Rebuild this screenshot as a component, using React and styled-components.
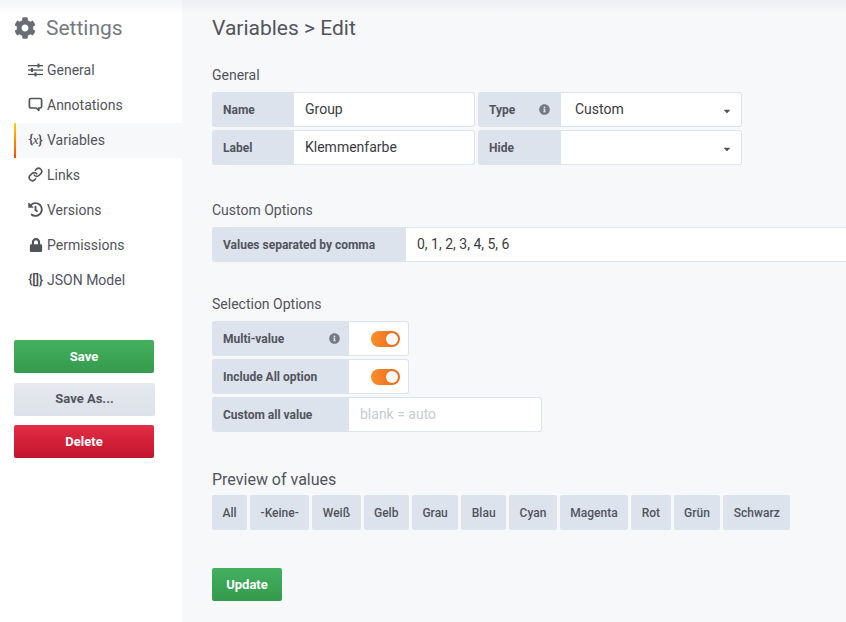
import React from 'react'
import styled, { createGlobalStyle } from 'styled-components'
import { FaCog, FaHistory, FaLock, FaInfoCircle, FaCaretDown } from 'react-icons/fa'
import { Link as LinkIcon } from 'lucide-react'

const GlobalStyle = createGlobalStyle`
  html, body {
    margin: 0;
    padding: 0;
    background: #f7f8fa;
    overflow: hidden;
  }
  * { box-sizing: border-box; }
  body {
    font-family: Roboto, "Liberation Sans", sans-serif;
    font-size: 14px;
    color: #52545c;
  }
`

const SlidersIcon = () => (
  <svg width="15" height="14" viewBox="0 0 15 14" fill="#52545c">
    <rect x="0" y="2" width="15" height="1.3" />
    <rect x="0" y="6.4" width="15" height="1.3" />
    <rect x="0" y="10.8" width="15" height="1.3" />
    <rect x="9.5" y="0.6" width="2" height="4" />
    <rect x="3" y="5" width="2" height="4" />
    <rect x="6.5" y="9.4" width="2" height="4" />
  </svg>
)

const CommentIcon = () => (
  <svg width="15" height="15" viewBox="0 0 15 15" fill="none">
    <path d="M3 1.5h9a1.6 1.6 0 0 1 1.6 1.6v6.3a1.6 1.6 0 0 1-1.6 1.6h-1.2v2.3l-2.4-2.3H3a1.6 1.6 0 0 1-1.6-1.6V3.1A1.6 1.6 0 0 1 3 1.5z" stroke="#52545c" strokeWidth="1.7" strokeLinejoin="round" />
  </svg>
)

const navItems = [
  { label: 'General', icon: <SlidersIcon /> },
  { label: 'Annotations', icon: <CommentIcon /> },
  { label: 'Variables', glyph: <>{'{'}<i>x</i>{'}'}</> },
  { label: 'Links', icon: <LinkIcon size={15} strokeWidth={2.5} /> },
  { label: 'Versions', icon: <FaHistory size={15} /> },
  { label: 'Permissions', icon: <FaLock size={14} /> },
  { label: 'JSON Model', glyph: '{[]}' },
]

const previewValues = ['All', '-Keine-', 'Weiß', 'Gelb', 'Grau', 'Blau', 'Cyan', 'Magenta', 'Rot', 'Grün', 'Schwarz']

function App() {
  return (
    <>
      <GlobalStyle />
      <Page>
        <Sidebar>
          <SidebarTitle>
            <FaCog size={22} />
            <span>Settings</span>
          </SidebarTitle>
          <Nav>
            {navItems.map((item) => (
              <NavItem key={item.label} $active={item.label === 'Variables'}>
                <NavIcon>{item.icon || <Glyph>{item.glyph}</Glyph>}</NavIcon>
                {item.label}
              </NavItem>
            ))}
          </Nav>
          <Actions>
            <ActionButton $kind="green">Save</ActionButton>
            <ActionButton $kind="gray">Save As...</ActionButton>
            <ActionButton $kind="red">Delete</ActionButton>
          </Actions>
        </Sidebar>

        <Content>
          <PageTitle>Variables &gt; Edit</PageTitle>

          <SectionTitle $top={23}>General</SectionTitle>
          <Rows>
            <Row>
              <Group>
                <Label $width={82}>Name</Label>
                <Field $width={181}>Group</Field>
              </Group>
              <Group>
                <Label $width={83} $wide>
                  Type
                  <InfoIcon />
                </Label>
                <SelectField $width={181}>
                  Custom
                  <Caret />
                </SelectField>
              </Group>
            </Row>
            <Row>
              <Group>
                <Label $width={82}>Label</Label>
                <Field $width={181}>Klemmenfarbe</Field>
              </Group>
              <Group>
                <Label $width={83}>Hide</Label>
                <SelectField $width={181}>
                  <span />
                  <Caret />
                </SelectField>
              </Group>
            </Row>
          </Rows>

          <SectionTitle $top={35}>Custom Options</SectionTitle>
          <Rows>
            <Group>
              <Label $width={194}>Values separated by comma</Label>
              <Field $width={460}>0, 1, 2, 3, 4, 5, 6</Field>
            </Group>
          </Rows>

          <SectionTitle $top={32}>Selection Options</SectionTitle>
          <Rows>
            <Group>
              <Label $width={137}>
                Multi-value
                <InfoIcon />
              </Label>
              <SwitchField>
                <Switch />
              </SwitchField>
            </Group>
            <Group>
              <Label $width={137}>Include All option</Label>
              <SwitchField>
                <Switch />
              </SwitchField>
            </Group>
            <Group>
              <Label $width={137}>Custom all value</Label>
              <Field $width={193} $placeholder>blank = auto</Field>
            </Group>
          </Rows>

          <PreviewTitle>Preview of values</PreviewTitle>
          <Chips>
            {previewValues.map((value) => (
              <Chip key={value}>{value}</Chip>
            ))}
          </Chips>

          <UpdateButton>Update</UpdateButton>
        </Content>
      </Page>
    </>
  )
}

const Page = styled.div`
  display: flex;
  width: 846px;
  height: 622px;
  overflow: hidden;
  position: relative;

  &::before {
    content: '';
    position: absolute;
    top: 0;
    left: 0;
    right: 0;
    height: 14px;
    background: linear-gradient(rgba(200, 204, 214, 0.22), rgba(200, 204, 214, 0));
    pointer-events: none;
  }
`

const Sidebar = styled.aside`
  flex: 0 0 182px;
  background: #fff;
  padding: 14px 0 0 14px;
`

const SidebarTitle = styled.div`
  display: flex;
  align-items: center;
  gap: 10px;
  height: 28px;
  font-size: 21px;
  color: #767980;

  svg { color: #6b6d74; }
`

const Nav = styled.nav`
  display: flex;
  flex-direction: column;
  margin-top: 11px;
`

const NavItem = styled.div`
  display: flex;
  align-items: center;
  height: 35px;
  padding: 0 0 2px 12px;
  font-size: 14px;
  color: #52545c;
  border-left: 2px solid transparent;
  ${(p) => p.$active && `
    background: #f7f8fa;
    border-image: linear-gradient(#ffd500, #ff4500) 1;
  `}
`

const NavIcon = styled.span`
  display: flex;
  align-items: center;
  justify-content: center;
  width: 15px;
  margin-right: 4px;
  color: #52545c;
`

const Glyph = styled.span`
  font-size: 13px;
  letter-spacing: -0.3px;
  white-space: nowrap;
  font-weight: 500;
  color: #45474e;

  i {
    font-family: "Liberation Serif", serif;
    font-size: 13px;
  }
`

const Actions = styled.div`
  display: flex;
  flex-direction: column;
  gap: 9px;
  margin-top: 42px;
`

const kinds = {
  green: 'background: linear-gradient(#42b05f, #359a4d); color: #fff; margin-bottom: 1px;',
  gray: 'background: linear-gradient(#e6e9ee, #dce1ea); color: #52545c; width: 141px; padding-bottom: 2px;',
  red: 'background: linear-gradient(#e22e46, #c2142c); color: #fff;',
}

const ActionButton = styled.button`
  width: 140px;
  height: 33px;
  border: none;
  border-radius: 2px;
  padding: 0;
  font-family: inherit;
  font-size: 13px;
  font-weight: 700;
  ${(p) => kinds[p.$kind]}
`

const Content = styled.main`
  flex: 1;
  min-width: 0;
  padding: 14px 0 0 30px;
`

const PageTitle = styled.h1`
  margin: 0;
  height: 28px;
  line-height: 28px;
  font-size: 21px;
  font-weight: 400;
  color: #52545c;
`

const SectionTitle = styled.h3`
  margin: ${(p) => p.$top}px 0 10px;
  height: 17px;
  line-height: 20px;
  font-size: 14px;
  font-weight: 400;
  color: #52545c;
`

const Rows = styled.div`
  display: flex;
  flex-direction: column;
  gap: 3px;
`

const Row = styled.div`
  display: flex;
  gap: 3px;
`

const Group = styled.div`
  display: flex;
  height: 35px;
`

const Label = styled.div`
  display: flex;
  align-items: center;
  justify-content: space-between;
  flex: 0 0 ${(p) => p.$width}px;
  padding: 0 ${(p) => (p.$wide ? 11 : 9)}px 0 11px;
  background: #dde3ec;
  border-radius: 3px 0 0 3px;
  font-size: 12px;
  font-weight: 700;
  color: #52545c;
`

const Field = styled.div`
  display: flex;
  align-items: center;
  flex: 0 0 ${(p) => p.$width}px;
  padding: 0 0 2px 11px;
  background: #fff;
  border: 1px solid #dde3ec;
  border-left: none;
  border-radius: 0 3px 3px 0;
  font-size: 14px;
  color: ${(p) => (p.$placeholder ? '#c7cbd3' : '#3a3c42')};
`

const SelectField = styled(Field)`
  justify-content: space-between;
  padding: 0 9px 2px 14px;
`

const SwitchField = styled(Field).attrs({ $width: 60 })`
  padding: 0 8px 0 0;
  justify-content: flex-end;
`

const Switch = styled.span`
  display: block;
  position: relative;
  width: 29px;
  height: 16px;
  border-radius: 8px;
  background: linear-gradient(90deg, #fb8e2a, #e8681a);

  &::after {
    content: '';
    position: absolute;
    top: 2px;
    right: 2px;
    width: 12px;
    height: 12px;
    border-radius: 50%;
    background: #f7f8fa;
  }
`

const InfoIcon = styled(FaInfoCircle)`
  width: 11px;
  height: 11px;
  color: #767980;
`

const Caret = styled(FaCaretDown)`
  width: 10px;
  height: 10px;
  margin-top: 5px;
  color: #52545c;
`

const PreviewTitle = styled.h3`
  margin: 38px 0 5px;
  height: 20px;
  line-height: 20px;
  font-size: 16px;
  font-weight: 400;
  color: #52545c;
`

const Chips = styled.div`
  display: flex;
  gap: 3px;
`

const Chip = styled.div`
  display: flex;
  align-items: center;
  height: 35px;
  padding: 0 10.5px;
  background: #dde3ec;
  border-radius: 2px;
  font-size: 12px;
  font-weight: 500;
  color: #52545c;
`

const UpdateButton = styled.button`
  display: block;
  width: 70px;
  height: 33px;
  margin-top: 38px;
  padding: 0;
  border: none;
  border-radius: 2px;
  background: linear-gradient(#42b05f, #359a4d);
  color: #fff;
  font-family: inherit;
  font-size: 13px;
  font-weight: 700;
`

export default App
